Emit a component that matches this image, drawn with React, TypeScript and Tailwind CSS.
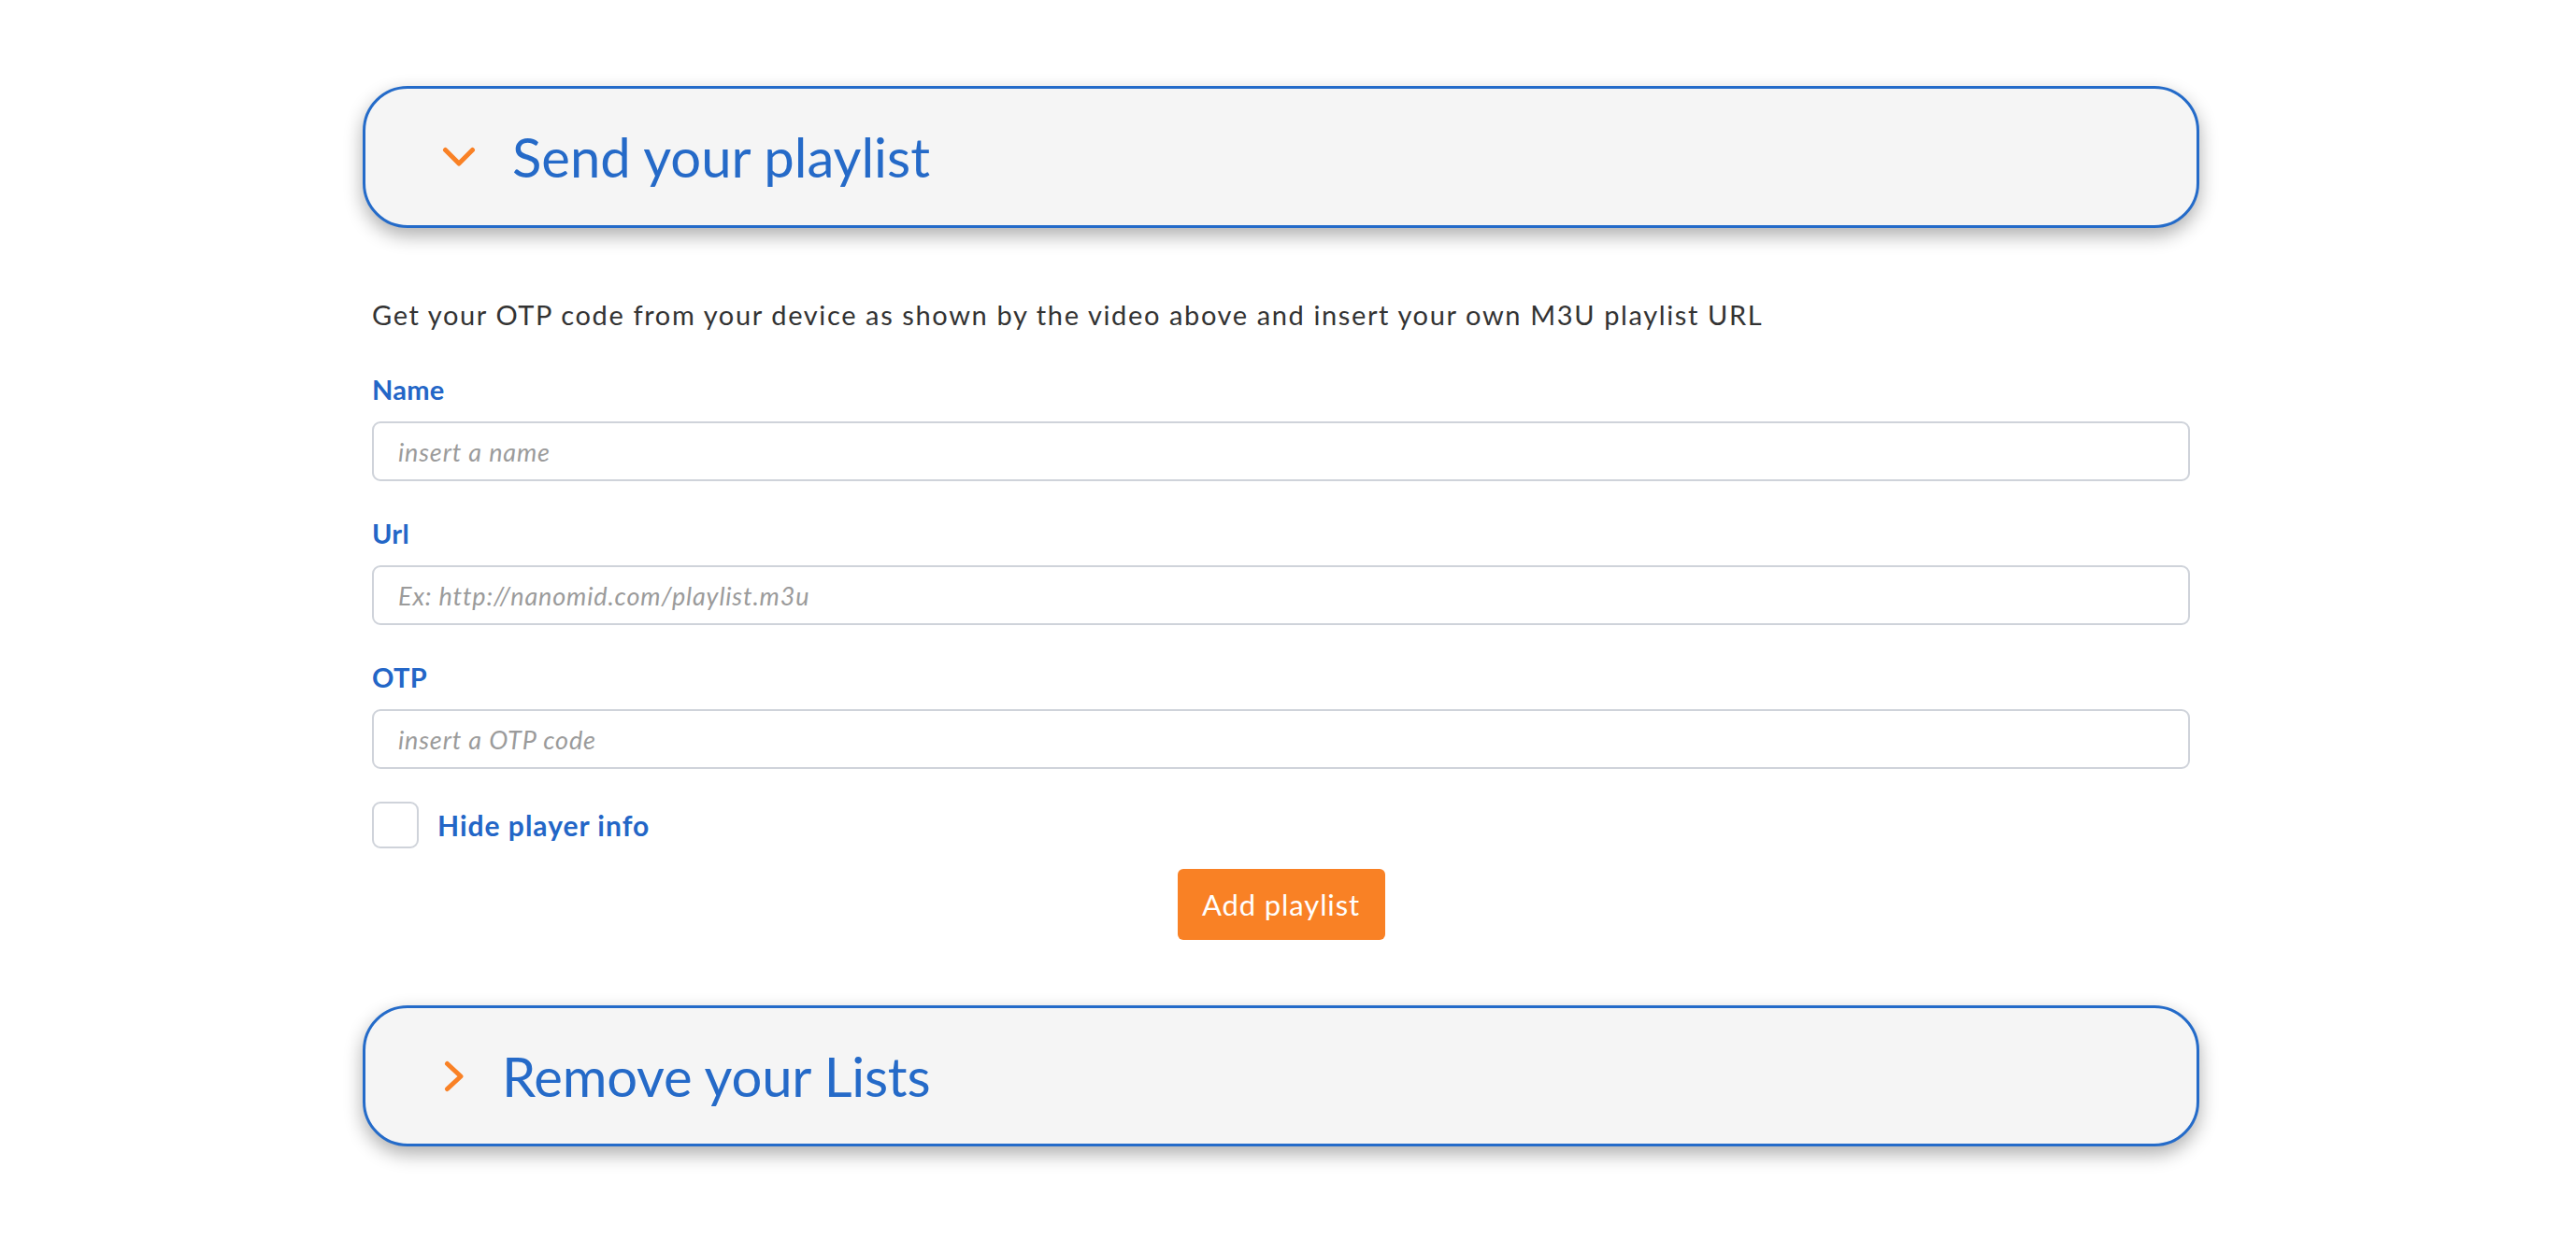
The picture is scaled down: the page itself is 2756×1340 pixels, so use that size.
import React from "react";

const font = { fontFamily: "Lato, 'Open Sans', sans-serif" };

function ChevronDown() {
  return (
    <svg width="36" height="22" viewBox="0 0 36 22" fill="none">
      <polyline points="3.5,3.5 18,18 32.5,3.5" stroke="#f98125" strokeWidth="5" strokeLinecap="round" strokeLinejoin="round" />
    </svg>
  );
}

function ChevronRight() {
  return (
    <svg width="22" height="34" viewBox="0 0 22 34" fill="none">
      <polyline points="3.5,3.5 18,17 3.5,30.5" stroke="#f98125" strokeWidth="5" strokeLinecap="round" strokeLinejoin="round" />
    </svg>
  );
}

function Field({ label, placeholder, first }: { label: string; placeholder: string; first?: boolean }) {
  return (
    <div className={first ? "mt-[40px]" : "mt-[36px]"}>
      <label className="block text-[29px] leading-[40px] font-bold tracking-[0.3px] text-[#2366c7]">{label}</label>
      <input
        type="text"
        placeholder={placeholder}
        className="mt-[14px] block w-full h-[64px] rounded-[9px] border-2 border-[#cfd3da] bg-white pl-[26px] text-[27px] tracking-[0.85px] text-[#333] outline-none placeholder:italic placeholder:text-[#9b9b9b]"
        style={font}
      />
    </div>
  );
}

export default function App() {
  return (
    <div className="min-h-[1340px] w-full bg-white" style={font}>
      <div className="pl-[388px] pt-[92px]">
        <div className="w-[1965px]">
          <div className="flex h-[152px] items-center rounded-[48px] border-[3px] border-[#246bc9] bg-[#f5f5f5] pl-[82px] shadow-[0_8px_20px_rgba(0,0,0,0.32)]">
            <ChevronDown />
            <span className="ml-[39px] text-[58px] leading-none text-[#256ac8]">Send your playlist</span>
          </div>

          <div className="px-[10px]">
            <p className="mt-[73px] text-[29px] leading-[40px] tracking-[1.62px] text-[#333333]">
              Get your OTP code from your device as shown by the video above and insert your own M3U playlist URL
            </p>
            <Field label="Name" placeholder="insert a name" first />
            <Field label="Url" placeholder="Ex: http://nanomid.com/playlist.m3u" />
            <Field label="OTP" placeholder="insert a OTP code" />

            <div className="mt-[35px] flex items-center">
              <input
                type="checkbox"
                className="h-[50px] w-[50px] appearance-none rounded-[9px] border-2 border-[#cfd3da] bg-white"
              />
              <span className="ml-[20px] text-[30px] font-bold tracking-[1px] text-[#2366c7]">Hide player info</span>
            </div>

            <div className="mt-[22px] flex justify-center">
              <button className="h-[76px] w-[222px] rounded-[6px] bg-[#f98125] text-[31px] tracking-[0.9px] text-white">
                Add playlist
              </button>
            </div>
          </div>

          <div className="-mx-[30px] mt-[50px] overflow-hidden px-[30px] pb-[30px] pt-[20px]">
            <div className="flex h-[151px] items-center rounded-[48px] border-[3px] border-[#246bc9] bg-[#f5f5f5] pl-[84px] shadow-[0_8px_20px_rgba(0,0,0,0.32)]">
              <ChevronRight />
              <span className="ml-[40px] text-[58px] leading-none tracking-[-0.2px] text-[#256ac8]">Remove your Lists</span>
            </div>
          </div>
        </div>
      </div>
    </div>
  );
}
